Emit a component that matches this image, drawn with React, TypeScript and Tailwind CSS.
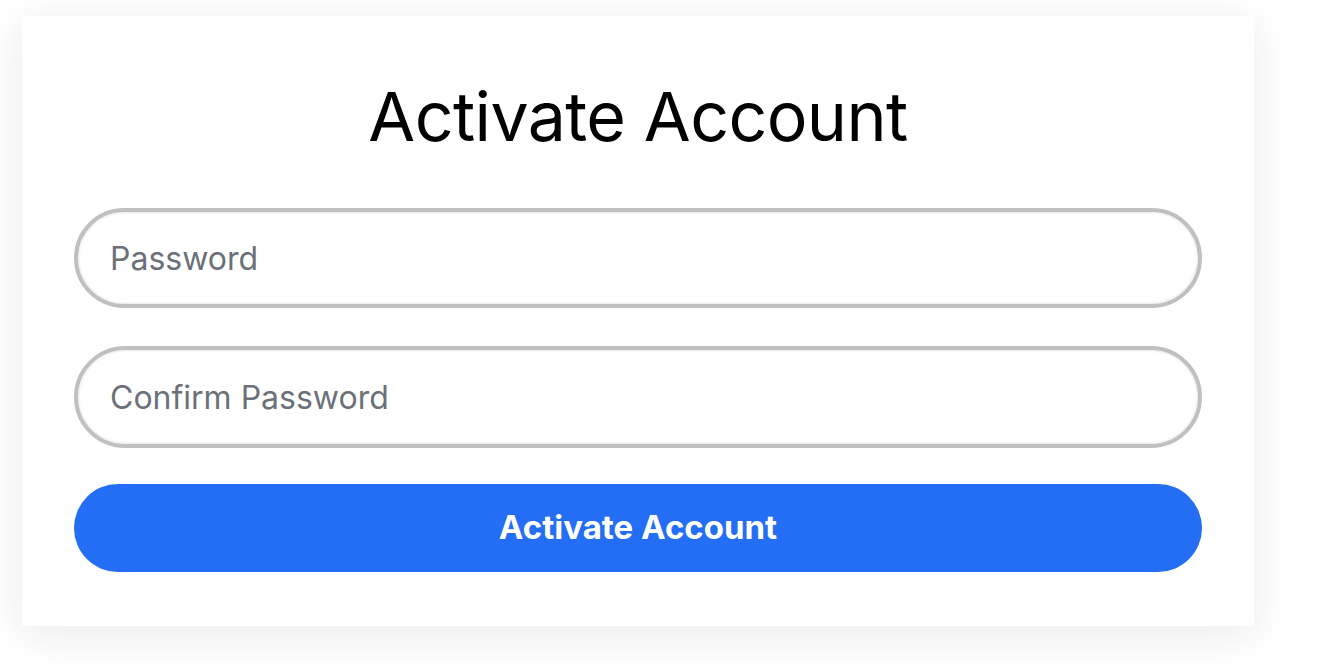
import { useState } from 'react'

export default function App() {
  const [password, setPassword] = useState('')
  const [confirm, setConfirm] = useState('')

  return (
    <div
      className="min-h-screen bg-white pl-[22px] pt-[16px]"
      style={{ fontFamily: 'Inter, "Noto Sans", sans-serif' }}
    >
      <div className="flex h-[610px] w-[1232px] flex-col bg-white px-[52px] pt-[66px] shadow-[0_8px_40px_rgba(30,30,60,0.09)]">
        <h1 className="text-center text-[68px] font-normal leading-[68px] tracking-[-0.6px] text-black">
          Activate Account
        </h1>

        <form className="mt-[58px] flex flex-col" onSubmit={(e) => e.preventDefault()}>
          <input
            type="password"
            value={password}
            onChange={(e) => setPassword(e.target.value)}
            placeholder="Password"
            className="h-[100px] w-full rounded-full border-4 border-[#c0c0c0] pl-[32px] text-[32px] text-gray-800 shadow-[inset_0_0_3px_rgba(0,0,0,0.18)] outline-none placeholder:text-[#6b7079]"
          />
          <input
            type="password"
            value={confirm}
            onChange={(e) => setConfirm(e.target.value)}
            placeholder="Confirm Password"
            className="mt-[38px] h-[102px] w-full rounded-full border-4 border-[#c0c0c0] pl-[32px] text-[32px] text-gray-800 shadow-[inset_0_0_3px_rgba(0,0,0,0.18)] outline-none placeholder:text-[#6b7079]"
          />
          <button
            type="submit"
            className="mt-[36px] h-[88px] w-full rounded-full bg-[#246ef5] text-[33px] font-bold text-white"
          >
            Activate Account
          </button>
        </form>
      </div>
    </div>
  )
}
